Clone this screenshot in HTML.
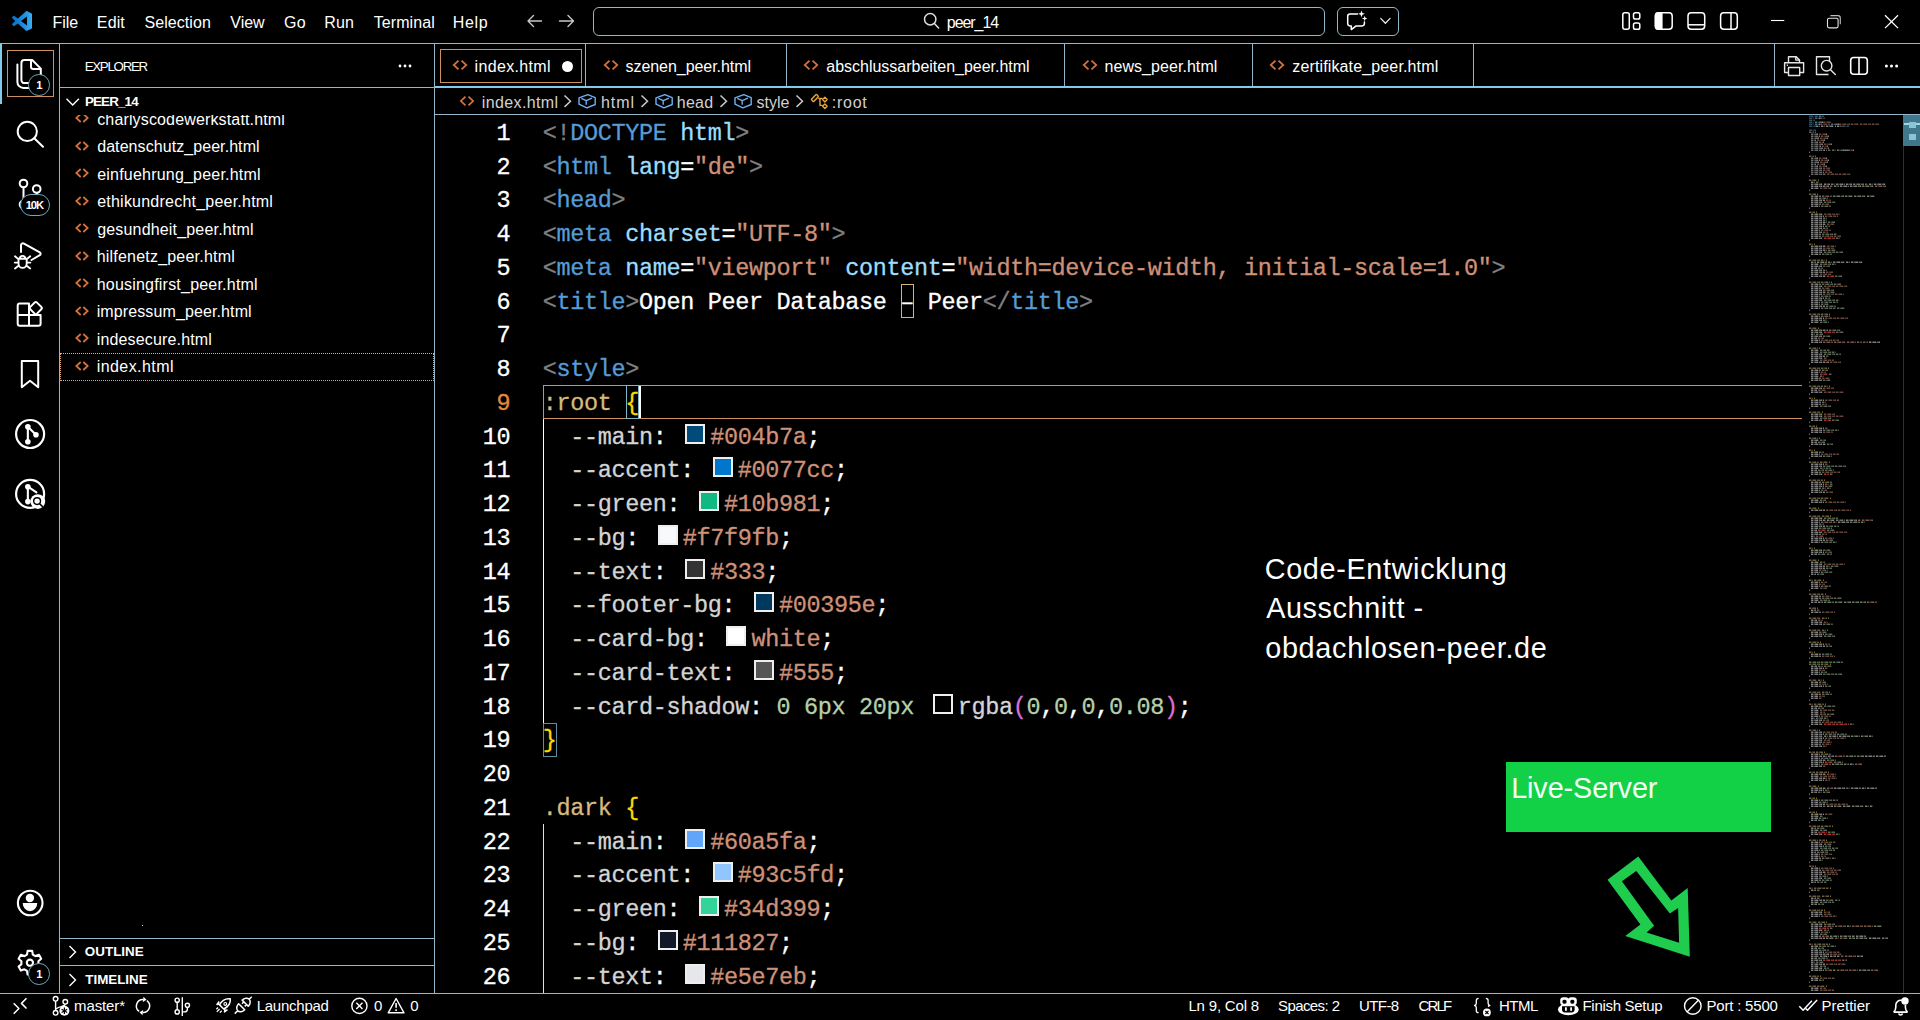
<!DOCTYPE html>
<html lang="en"><head><meta charset="utf-8"><title>index.html - peer_14 - Visual Studio Code</title>
<style>
html,body{margin:0;padding:0;background:#000;}
body{width:1920px;height:1020px;overflow:hidden;position:relative;font-family:"Liberation Sans",sans-serif;color:#fff;}
.t{position:absolute;white-space:pre;line-height:20px;font-family:"Liberation Sans",sans-serif;}
.a{position:absolute;}
svg{position:absolute;overflow:visible;}
.ln{position:absolute;left:0;width:1920px;height:34px;}
.code{position:absolute;white-space:pre;font-family:"Liberation Mono",monospace;-webkit-text-stroke:0.3px;}
.sw{display:inline-block;box-sizing:border-box;width:20px;height:20px;border:2px solid #eee;margin:0 5px;vertical-align:0px;}
</style></head><body>

<!-- frame borders -->
<div class="a" style="left:0px;top:43px;width:1920px;height:1px;background:#93b6ca;"></div>
<div class="a" style="left:59px;top:44px;width:1px;height:950px;background:#93b6ca;"></div>
<div class="a" style="left:434px;top:44px;width:1px;height:950px;background:#93b6ca;"></div>
<div class="a" style="left:60px;top:87px;width:374px;height:1px;background:#93b6ca;"></div>
<div class="a" style="left:435px;top:86px;width:1485px;height:2px;background:#7fcbe9;"></div>
<div class="a" style="left:435px;top:114px;width:1485px;height:1px;background:#93b6ca;"></div>
<div class="a" style="left:0px;top:993px;width:1920px;height:1px;background:#93b6ca;"></div>
<div class="a" style="left:60px;top:938px;width:374px;height:1px;background:#93b6ca;"></div>
<div class="a" style="left:60px;top:965px;width:374px;height:1px;background:#93b6ca;"></div>
<div class="a" style="left:585px;top:44px;width:1px;height:42px;background:#93b6ca;"></div>
<div class="a" style="left:786px;top:44px;width:1px;height:42px;background:#93b6ca;"></div>
<div class="a" style="left:1064px;top:44px;width:1px;height:42px;background:#93b6ca;"></div>
<div class="a" style="left:1252px;top:44px;width:1px;height:42px;background:#93b6ca;"></div>
<div class="a" style="left:1473px;top:44px;width:1px;height:42px;background:#93b6ca;"></div>
<div class="a" style="left:1774px;top:44px;width:1px;height:42px;background:#93b6ca;"></div>
<div class="a" style="left:0px;top:44px;width:2px;height:60px;background:#7fcbe9;"></div>
<!-- title bar -->
<svg style="left:12px;top:11px" width="20" height="20" viewBox="0 0 100 100"><defs><linearGradient id="vg" x1="0" y1="0" x2="1" y2="0"><stop offset="0" stop-color="#0a6fc2"/><stop offset="0.6" stop-color="#1f8fe0"/><stop offset="1" stop-color="#37aef5"/></linearGradient></defs><path fill="url(#vg)" fill-rule="evenodd" d="M70.9 99.3c1.6.6 3.4.6 5-.2l20.6-9.9c2.1-1 3.5-3.2 3.5-5.6V16.4c0-2.4-1.4-4.6-3.5-5.6L75.9.9c-2.1-1-4.6-.8-6.4.6-.3.2-.5.4-.7.6L29.4 38 12.2 25c-1.6-1.2-3.8-1.1-5.3.2l-5.5 5c-1.8 1.7-1.8 4.5 0 6.2L16.200 50 1.400 63.600c-1.800 1.600-1.800 4.500 0 6.100l5.500 5c1.500 1.400 3.700 1.500 5.300.300L29.400 62l39.400 36c.600.600 1.300 1.100 2.100 1.400zM75 27.300L45.100 50 75 72.700z"/></svg>
<span class="t " style="left:52.50px;top:13px;font-size:16px;letter-spacing:-0.083px;color:#fff;">File</span>
<span class="t " style="left:96.85px;top:13px;font-size:16px;letter-spacing:0.133px;color:#fff;">Edit</span>
<span class="t " style="left:144.55px;top:13px;font-size:16px;letter-spacing:0.056px;color:#fff;">Selection</span>
<span class="t " style="left:230.30px;top:13px;font-size:16px;letter-spacing:-0.033px;color:#fff;">View</span>
<span class="t " style="left:283.95px;top:13px;font-size:16px;letter-spacing:0.300px;color:#fff;">Go</span>
<span class="t " style="left:324.35px;top:13px;font-size:16px;letter-spacing:0.125px;color:#fff;">Run</span>
<span class="t " style="left:373.75px;top:13px;font-size:16px;letter-spacing:0.071px;color:#fff;">Terminal</span>
<span class="t " style="left:452.75px;top:13px;font-size:16px;letter-spacing:0.667px;color:#fff;">Help</span>
<svg style="left:520px;top:10px" width="64" height="22" viewBox="520 10 64 22" fill="none" stroke="#c8c8c8" stroke-width="1.4" stroke-linecap="round" stroke-linejoin="round"><path d="M541.500 21H528M533.500 15.500L528 21l5.500 5.500"/><path d="M559.500 21H573.500M568 15.500l5.500 5.500-5.500 5.500"/></svg>
<div class="a" style="left:593px;top:7px;width:730px;height:27px;border:1px solid #93b6ca;border-radius:6px;"></div>
<svg style="left:920px;top:10px" width="22" height="22" viewBox="920 10 22 22" fill="none" stroke="#e0e0e0" stroke-width="1.5" stroke-linecap="round"><circle cx="930.200" cy="19.300" r="5.700"/><path d="M934.400 23.600L938.600 28"/></svg>
<span class="t " style="left:946.80px;top:13px;font-size:16px;letter-spacing:-1.050px;color:#fff;">peer_14</span>
<div class="a" style="left:1337px;top:7px;width:60px;height:27px;border:1px solid #8fb9c9;border-radius:6px;"></div>
<svg style="left:1340px;top:8px" width="56" height="26" viewBox="1340 8 56 26" fill="none" stroke="#fff" stroke-width="1.5" stroke-linecap="round" stroke-linejoin="round"><path d="M1357.500 13.900H1350a2.300 2.300 0 0 0-2.300 2.300v7.400a2.300 2.300 0 0 0 2.300 2.300h1.300v3.700l4.800-3.700h6a2.300 2.300 0 0 0 2.300-2.300v-1.600"/><path fill="#fff" stroke="none" d="M1361.500 10.400l.9 2.500 2.500.9-2.500.9-.9 2.500-.9-2.500-2.500-.9 2.500-.9zM1364.700 15.800l.7 2 2 .7-2 .7-.7 2-.7-2-2-.7 2-.7z"/><path stroke="#e8e8e8" stroke-width="1.300" d="M1380.700 18.400l4.700 4.800 4.700-4.800"/></svg>
<svg style="left:1618px;top:8px" width="124" height="26" viewBox="1618 8 124 26" fill="none" stroke="#fff" stroke-width="1.500">
<rect x="1622.800" y="12.800" width="6.500" height="16.400" rx="2"/><rect x="1633.500" y="12.800" width="6.300" height="6.300" rx="1.800"/><rect x="1633.500" y="22.900" width="6.300" height="6.300" rx="1.800"/>
<rect x="1655.400" y="12.800" width="16.800" height="16.400" rx="3.200"/><path fill="#fff" stroke="none" d="M1658.600 12.100h4v17.800h-4a3.900 3.900 0 0 1-3.900-3.900v-10a3.900 3.900 0 0 1 3.900-3.900z"/>
<rect x="1688" y="12.800" width="16.700" height="16.400" rx="3.200"/><path d="M1688 24.800h16.700"/>
<rect x="1720.600" y="12.800" width="16.700" height="16.400" rx="3.200"/><path d="M1731 12.800v16.400"/>
</svg>
<svg style="left:1764px;top:8px" width="150" height="28" viewBox="1764 8 150 28" fill="none" stroke="#fff" stroke-width="1.100">
<path d="M1771 20.500h13.300"/>
<rect x="1827.500" y="18.200" width="10.600" height="9.700" rx="1.600" stroke="#e4e4e4"/><path stroke="#bdbdbd" d="M1830.400 15.600h7.600a2.300 2.300 0 0 1 2.300 2.300v6.400"/>
<path stroke-width="1.300" d="M1885 15.200l13 12.900M1898 15.200l-13 12.900"/>
</svg>
<!-- activity bar -->
<div class="a" style="left:7px;top:50px;width:45px;height:45px;border:1px solid #cf8f5c;"></div>
<svg style="left:0;top:44px" width="60" height="470" viewBox="0 44 60 470" fill="none" stroke="#fff" stroke-width="2" stroke-linecap="round" stroke-linejoin="round">
<!-- files -->
<path d="M24.400 60h7.800l8.600 8.600v11.500a3 3 0 0 1-3 3H24.400a3 3 0 0 1-3-3V63a3 3 0 0 1 3-3z"/><path d="M31 60.500v6.200a2.300 2.300 0 0 0 2.300 2.300h7"/><path d="M17.400 64.500v17.400a6 6 0 0 0 6 6h6.500"/>
<!-- search -->
<circle cx="27.300" cy="131.400" r="9.600"/><path d="M34.300 138.300l8.700 8.400"/>
<!-- source control -->
<circle cx="23.500" cy="183.500" r="3.800"/><circle cx="36.700" cy="189" r="3.800"/><circle cx="23.500" cy="204.500" r="3.800"/><path d="M23.500 187.500v13M36.700 193v1.500a4 4 0 0 1-4 4h-5.200a4 4 0 0 0-4 4"/>
<!-- debug -->
<path d="M21 252v-6.600a2 2 0 0 1 3-1.800l15.800 8.800a1.600 1.600 0 0 1 0 2.800l-8.300 4.800"/>
<path stroke-width="1.900" d="M19.800 258.700a2.800 2.800 0 0 1 5.600 0M18.500 258.700h8.200v4.700a4.100 4.500 0 0 1-8.200 0zM15 256.300l3.300 2.800M30.200 256.300l-3.300 2.800M14.800 262.600h3.500M30.400 262.600h-3.500M15 268.400l3.500-2.700M30.200 268.400l-3.500-2.700"/>
<!-- extensions -->
<path d="M29 303.400h-9.300a2 2 0 0 0-2 2v18.400a2 2 0 0 0 2 2h18.900a2 2 0 0 0 2-2v-8.900H17.700M29 303.400v22.400"/><path d="M34.600 302.600a1.700 1.700 0 0 1 2.400 0l4.300 4.300a1.700 1.700 0 0 1 0 2.400l-4.300 4.300a1.700 1.700 0 0 1-2.400 0l-4.300-4.300a1.700 1.700 0 0 1 0-2.400z"/>
<!-- bookmark -->
<path d="M21.800 361h16.400v26.200l-8.200-6.400-8.200 6.400z"/>
<!-- git graph -->
<circle cx="30.100" cy="434" r="14" stroke-width="2.200"/><g fill="#fff" stroke="none"><circle cx="27.850" cy="426.800" r="2.800"/><circle cx="36" cy="434.700" r="2.800"/><circle cx="27.850" cy="441.700" r="2.800"/></g><path stroke-width="2.100" d="M27.850 426.800v14.900M27.850 426.800l8.100 7.900"/>
<!-- git graph search -->
<circle cx="30.100" cy="493.900" r="14" stroke-width="2.200"/><g fill="#fff" stroke="none"><circle cx="27.850" cy="486.700" r="2.800"/><circle cx="27.850" cy="501.600" r="2.800"/></g><path stroke-width="2.100" d="M27.850 486.700v14.900M27.850 486.700l8.600 5.600"/>
<circle cx="37.800" cy="501.600" r="7.400" fill="#fff" stroke="none"/><circle cx="37.100" cy="501.100" r="3.400" fill="none" stroke="#000" stroke-width="1.400"/><path stroke="#000" stroke-width="1.500" d="M39.600 503.700l2.700 2.700"/>
</svg>
<div class="a" style="left:28.400000000000002px;top:74.10000000000001px;width:19.6px;height:19.6px;border:1px solid #6fa9bc;border-radius:10.8px;background:#000;"></div><span class="t " style="left:36.30px;top:75px;font-size:11.2px;letter-spacing:0.000px;color:#fff;font-weight:700;">1</span>
<div class="a" style="left:20.4px;top:194px;width:27.4px;height:20px;border:1px solid #6fa9bc;border-radius:11px;background:#000;"></div><span class="t " style="left:25.70px;top:195px;font-size:11.2px;letter-spacing:-1.100px;color:#fff;font-weight:700;">10K</span>
<svg style="left:0;top:880px" width="60" height="112" viewBox="0 880 60 112" fill="none" stroke="#fff" stroke-width="2.100" stroke-linejoin="round">
<circle cx="30.200" cy="903" r="12.300"/><circle cx="29.900" cy="898" r="4.200" fill="#fff" stroke="none"/><path fill="#fff" stroke="none" d="M22.700 903h14.600a7.300 8.200 0 0 1-14.600 0z"/>
<path d="M27.0 954.6L27.6 950.9L32.2 950.9L32.8 954.6L35.4 956.1L39.0 954.8L41.2 958.8L38.4 961.2L38.4 964.2L41.2 966.6L39.0 970.6L35.4 969.3L32.8 970.8L32.2 974.5L27.6 974.5L27.0 970.8L24.4 969.3L20.8 970.6L18.6 966.6L21.4 964.2L21.4 961.2L18.6 958.8L20.8 954.8L24.4 956.1z"/><circle cx="29.9" cy="962.7" r="3.100"/></svg>
<div class="a" style="left:28.400000000000002px;top:963.1px;width:19.6px;height:19.6px;border:1px solid #6fa9bc;border-radius:10.8px;background:#000;"></div><span class="t " style="left:36.30px;top:964px;font-size:11.2px;letter-spacing:0.000px;color:#fff;font-weight:700;">1</span>
<!-- sidebar -->
<span class="t " style="left:84.70px;top:57px;font-size:13.3px;letter-spacing:-1.279px;color:#fff;">EXPLORER</span>
<svg style="left:396px;top:62px" width="20" height="8" viewBox="396 62 20 8" fill="#fff"><circle cx="400" cy="66" r="1.400"/><circle cx="405" cy="66" r="1.400"/><circle cx="410" cy="66" r="1.400"/></svg>
<div class="a" style="left:60px;top:115px;width:374px;height:823px;overflow:hidden;"><div class="a" style="left:-60px;top:-115px;width:500px;height:1020px;">
<svg style="left:74.3px;top:111.0px" width="16" height="14" viewBox="74.3 111.0 16 14" fill="none" stroke="#d9733c" stroke-width="1.700" stroke-linejoin="miter"><path d="M81.0 114.0L76.6 118.0L81.0 122.0M83.6 114.0L88.0 118.0L83.6 122.0"/></svg>
<span class="t " style="left:97.20px;top:110px;font-size:16px;letter-spacing:0.150px;color:#fff;">charlyscodewerkstatt.html</span>
<svg style="left:74.3px;top:138.5px" width="16" height="14" viewBox="74.3 138.5 16 14" fill="none" stroke="#d9733c" stroke-width="1.700" stroke-linejoin="miter"><path d="M81.0 141.5L76.6 145.5L81.0 149.5M83.6 141.5L88.0 145.5L83.6 149.5"/></svg>
<span class="t " style="left:97.20px;top:137px;font-size:16px;letter-spacing:0.070px;color:#fff;">datenschutz_peer.html</span>
<svg style="left:74.3px;top:166.0px" width="16" height="14" viewBox="74.3 166.0 16 14" fill="none" stroke="#d9733c" stroke-width="1.700" stroke-linejoin="miter"><path d="M81.0 169.0L76.6 173.0L81.0 177.0M83.6 169.0L88.0 173.0L83.6 177.0"/></svg>
<span class="t " style="left:97.20px;top:165px;font-size:16px;letter-spacing:0.208px;color:#fff;">einfuehrung_peer.html</span>
<svg style="left:74.3px;top:193.5px" width="16" height="14" viewBox="74.3 193.5 16 14" fill="none" stroke="#d9733c" stroke-width="1.700" stroke-linejoin="miter"><path d="M81.0 196.5L76.6 200.5L81.0 204.5M83.6 196.5L88.0 200.5L83.6 204.5"/></svg>
<span class="t " style="left:97.20px;top:192px;font-size:16px;letter-spacing:0.225px;color:#fff;">ethikundrecht_peer.html</span>
<svg style="left:74.3px;top:221.0px" width="16" height="14" viewBox="74.3 221.0 16 14" fill="none" stroke="#d9733c" stroke-width="1.700" stroke-linejoin="miter"><path d="M81.0 224.0L76.6 228.0L81.0 232.0M83.6 224.0L88.0 228.0L83.6 232.0"/></svg>
<span class="t " style="left:97.20px;top:220px;font-size:16px;letter-spacing:0.174px;color:#fff;">gesundheit_peer.html</span>
<svg style="left:74.3px;top:248.5px" width="16" height="14" viewBox="74.3 248.5 16 14" fill="none" stroke="#d9733c" stroke-width="1.700" stroke-linejoin="miter"><path d="M81.0 251.5L76.6 255.5L81.0 259.5M83.6 251.5L88.0 255.5L83.6 259.5"/></svg>
<span class="t " style="left:96.70px;top:247px;font-size:16px;letter-spacing:0.208px;color:#fff;">hilfenetz_peer.html</span>
<svg style="left:74.3px;top:276.0px" width="16" height="14" viewBox="74.3 276.0 16 14" fill="none" stroke="#d9733c" stroke-width="1.700" stroke-linejoin="miter"><path d="M81.0 279.0L76.6 283.0L81.0 287.0M83.6 279.0L88.0 283.0L83.6 287.0"/></svg>
<span class="t " style="left:96.70px;top:275px;font-size:16px;letter-spacing:0.210px;color:#fff;">housingfirst_peer.html</span>
<svg style="left:74.3px;top:303.5px" width="16" height="14" viewBox="74.3 303.5 16 14" fill="none" stroke="#d9733c" stroke-width="1.700" stroke-linejoin="miter"><path d="M81.0 306.5L76.6 310.5L81.0 314.5M83.6 306.5L88.0 310.5L83.6 314.5"/></svg>
<span class="t " style="left:96.70px;top:302px;font-size:16px;letter-spacing:0.111px;color:#fff;">impressum_peer.html</span>
<svg style="left:74.3px;top:331.0px" width="16" height="14" viewBox="74.3 331.0 16 14" fill="none" stroke="#d9733c" stroke-width="1.700" stroke-linejoin="miter"><path d="M81.0 334.0L76.6 338.0L81.0 342.0M83.6 334.0L88.0 338.0L83.6 342.0"/></svg>
<span class="t " style="left:96.70px;top:330px;font-size:16px;letter-spacing:0.157px;color:#fff;">indesecure.html</span>
<svg style="left:74.3px;top:358.5px" width="16" height="14" viewBox="74.3 358.5 16 14" fill="none" stroke="#d9733c" stroke-width="1.700" stroke-linejoin="miter"><path d="M81.0 361.5L76.6 365.5L81.0 369.5M83.6 361.5L88.0 365.5L83.6 369.5"/></svg>
<span class="t " style="left:96.70px;top:357px;font-size:16px;letter-spacing:0.428px;color:#fff;">index.html</span>
</div></div>
<svg style="left:64px;top:94px" width="18" height="16" viewBox="64 94 18 16" fill="none" stroke="#fff" stroke-width="1.400"><path d="M66.500 98.700l6.200 6.300 6.200-6.300"/></svg>
<span class="t " style="left:84.95px;top:92px;font-size:13.4px;letter-spacing:-0.858px;color:#fff;font-weight:700;">PEER_14</span>
<div class="a" style="left:60px;top:353px;width:372px;height:26px;border:1px dotted #d8a878;"></div>
<div class="a" style="left:142px;top:925px;width:1px;height:1px;background:#ddd;"></div>
<svg style="left:64px;top:943.3px" width="18" height="18" viewBox="64 943.3 18 18" fill="none" stroke="#fff" stroke-width="1.400"><path d="M69.500 946.3l6 6-6 6"/></svg>
<span class="t " style="left:84.80px;top:942px;font-size:13.4px;letter-spacing:0.025px;color:#fff;font-weight:700;">OUTLINE</span>
<svg style="left:64px;top:970.8px" width="18" height="18" viewBox="64 970.8 18 18" fill="none" stroke="#fff" stroke-width="1.400"><path d="M69.500 973.8l6 6-6 6"/></svg>
<span class="t " style="left:85.30px;top:970px;font-size:13.4px;letter-spacing:-0.029px;color:#fff;font-weight:700;">TIMELINE</span>
<!-- tabs -->
<div class="a" style="left:440px;top:49px;width:140px;height:32px;border:1px solid #cf8f5c;"></div>
<svg style="left:451.7px;top:58.2px" width="16" height="14" viewBox="451.7 58.2 16 14" fill="none" stroke="#d9733c" stroke-width="1.700" stroke-linejoin="miter"><path d="M458.2 60.8L453.4 65.2L458.2 69.6M461.2 60.8L466.0 65.2L461.2 69.6"/></svg>
<span class="t " style="left:474.60px;top:57px;font-size:16px;letter-spacing:0.339px;color:#fff;">index.html</span>
<svg style="left:602.5px;top:58.2px" width="16" height="14" viewBox="602.5 58.2 16 14" fill="none" stroke="#d9733c" stroke-width="1.700" stroke-linejoin="miter"><path d="M609.0 60.8L604.2 65.2L609.0 69.6M612.0 60.8L616.8 65.2L612.0 69.6"/></svg>
<span class="t " style="left:625.50px;top:57px;font-size:16px;letter-spacing:-0.050px;color:#fff;">szenen_peer.html</span>
<svg style="left:803.3px;top:58.2px" width="16" height="14" viewBox="803.3 58.2 16 14" fill="none" stroke="#d9733c" stroke-width="1.700" stroke-linejoin="miter"><path d="M809.8 60.8L805.0 65.2L809.8 69.6M812.8 60.8L817.6 65.2L812.8 69.6"/></svg>
<span class="t " style="left:826.25px;top:57px;font-size:16px;letter-spacing:-0.010px;color:#fff;">abschlussarbeiten_peer.html</span>
<svg style="left:1081.5px;top:58.2px" width="16" height="14" viewBox="1081.5 58.2 16 14" fill="none" stroke="#d9733c" stroke-width="1.700" stroke-linejoin="miter"><path d="M1088.0 60.8L1083.2 65.2L1088.0 69.6M1091.0 60.8L1095.8 65.2L1091.0 69.6"/></svg>
<span class="t " style="left:1104.50px;top:57px;font-size:16px;letter-spacing:0.058px;color:#fff;">news_peer.html</span>
<svg style="left:1269.2px;top:58.2px" width="16" height="14" viewBox="1269.2 58.2 16 14" fill="none" stroke="#d9733c" stroke-width="1.700" stroke-linejoin="miter"><path d="M1275.7 60.8L1270.9 65.2L1275.7 69.6M1278.7 60.8L1283.5 65.2L1278.7 69.6"/></svg>
<span class="t " style="left:1292.25px;top:57px;font-size:16px;letter-spacing:0.138px;color:#fff;">zertifikate_peer.html</span>
<div class="a" style="left:562px;top:60.500px;width:11px;height:11px;border-radius:6px;background:#fff;"></div>
<svg style="left:1778px;top:52px" width="130" height="28" viewBox="1778 52 130 28" fill="none" stroke="#e6e6e6" stroke-width="1.400" stroke-linejoin="round">
<path d="M1788.500 62.500v-5.800h7.800l3.200 3.200v2.600M1795.800 56.700v3.400h3.600"/><path d="M1788.400 72.500h-3.800v-9.800h19v9.800h-3.900"/><rect x="1788.500" y="67.500" width="11.200" height="8" /><path d="M1786.700 65.200h1.200" stroke-width="1.600"/>
<path d="M1829.500 62v-5.300h-13v17.800h12"/><circle cx="1826.600" cy="65.700" r="5.300"/><path d="M1830.500 69.800l4.800 4.800" stroke-linecap="round"/>
<rect x="1850.700" y="57.500" width="16.600" height="16.800" rx="3" stroke="#fff" stroke-width="1.600"/><path d="M1859 57.500v16.800" stroke="#fff" stroke-width="1.600"/>
<g fill="#fff" stroke="none"><circle cx="1886.400" cy="66.100" r="1.500"/><circle cx="1891.500" cy="66.100" r="1.500"/><circle cx="1896.600" cy="66.100" r="1.500"/></g>
</svg>
<!-- breadcrumbs -->
<svg style="left:458.8px;top:94.1px" width="16" height="14" viewBox="458.8 94.1 16 14" fill="none" stroke="#d9733c" stroke-width="1.700" stroke-linejoin="miter"><path d="M465.3 96.8L460.7 101.1L465.3 105.4M468.3 96.8L472.9 101.1L468.3 105.4"/></svg>
<span class="t " style="left:481.75px;top:93px;font-size:16px;letter-spacing:0.378px;color:#d0d0d0;">index.html</span>
<svg style="left:562px;top:93px" width="12" height="16" viewBox="562 93 12 16" fill="none" stroke="#c8c8c8" stroke-width="1.500"><path d="M564.5 95.500l6 5.700-6 5.700"/></svg>
<svg style="left:577.3px;top:92px" width="21" height="18" viewBox="577.3 92 21 18" fill="none" stroke="#6fb0f2" stroke-width="1.400" stroke-linejoin="round"><path d="M588.0999999999999 94.600l7.400 3v6.900l-8.300 3.300-7.900-3.600v-6.300z"/><path d="M581.5999999999999 98.400l4.900 2.200 5.800-2.500M586.5 100.600v4.200"/></svg>
<span class="t " style="left:601.00px;top:93px;font-size:16px;letter-spacing:0.950px;color:#d0d0d0;">html</span>
<svg style="left:638.5px;top:93px" width="12" height="16" viewBox="638.5 93 12 16" fill="none" stroke="#c8c8c8" stroke-width="1.500"><path d="M641.0 95.500l6 5.700-6 5.700"/></svg>
<svg style="left:653.5px;top:92px" width="21" height="18" viewBox="653.5 92 21 18" fill="none" stroke="#6fb0f2" stroke-width="1.400" stroke-linejoin="round"><path d="M664.3 94.600l7.400 3v6.900l-8.300 3.300-7.900-3.600v-6.300z"/><path d="M657.8 98.400l4.900 2.200 5.800-2.500M662.7 100.600v4.200"/></svg>
<span class="t " style="left:676.80px;top:93px;font-size:16px;letter-spacing:0.217px;color:#d0d0d0;">head</span>
<svg style="left:717.5px;top:93px" width="12" height="16" viewBox="717.5 93 12 16" fill="none" stroke="#c8c8c8" stroke-width="1.500"><path d="M720.0 95.500l6 5.700-6 5.700"/></svg>
<svg style="left:732.9px;top:92px" width="21" height="18" viewBox="732.9 92 21 18" fill="none" stroke="#6fb0f2" stroke-width="1.400" stroke-linejoin="round"><path d="M743.6999999999999 94.600l7.400 3v6.900l-8.300 3.300-7.900-3.600v-6.300z"/><path d="M737.1999999999999 98.400l4.900 2.200 5.800-2.500M742.1 100.600v4.200"/></svg>
<span class="t " style="left:756.40px;top:93px;font-size:16px;letter-spacing:0.025px;color:#d0d0d0;">style</span>
<svg style="left:794.3px;top:93px" width="12" height="16" viewBox="794.3 93 12 16" fill="none" stroke="#c8c8c8" stroke-width="1.500"><path d="M796.8 95.500l6 5.700-6 5.700"/></svg>
<svg style="left:809px;top:92px" width="22" height="18" viewBox="809 92 22 18" fill="none" stroke="#eaa43c" stroke-width="1.400" stroke-linejoin="round"><rect x="811.200" y="96.400" width="7.400" height="3.200" rx="0.800" transform="rotate(-46 814.900 98)"/><path d="M818.300 98.500h4.200M820 98.500v6.900h2.600"/><path d="M824.900 97.300l2.300 2.300-2.300 2.300-2.300-2.300zM824.900 103.900l2.300 2.300-2.300 2.300-2.300-2.300z"/></svg>
<span class="t " style="left:831.75px;top:93px;font-size:16px;letter-spacing:0.750px;color:#d0d0d0;">:root</span>
<!-- editor -->
<div class="a" id="ed" style="left:435px;top:115px;width:1368px;height:878px;overflow:hidden;"><div class="a" style="left:-435px;top:-115px;width:1920px;height:1020px;">
<div class="a" style="left:543px;top:385px;width:1258px;height:32px;border:1px solid #cf8f5c;border-right:0;"></div>
<div class="a" style="left:543px;top:419px;width:1px;height:304px;background:#fff;"></div>
<div class="a" style="left:543px;top:824px;width:1px;height:170px;background:#e0e0e0;"></div>
<div class="a" style="left:626px;top:385px;width:11px;height:32px;border:1px solid #7fb6c9;"></div>
<div class="a" style="left:543px;top:723px;width:12px;height:32px;border:1px solid #5f8ea0;"></div>
<div class="a" style="left:638.500px;top:386px;width:2.500px;height:32px;background:#fff;"></div>
<div class="a" style="left:901px;top:284px;width:11px;height:32px;border:1px solid #d9b27c;"></div>
<div class="code" style="left:440px;width:70.500px;text-align:right;top:116.75px;line-height:33.75px;font-size:23.5px;letter-spacing:-0.3523px;color:#fff;"><span style="margin-right:0.3523px">1</span></div>
<div class="code" style="left:542.7px;top:116.75px;line-height:33.75px;font-size:23.5px;letter-spacing:-0.3523px;"><span style="color:#808080">&lt;!</span><span style="color:#569cd6">DOCTYPE</span><span style="color:#ffffff"> </span><span style="color:#9cdcfe">html</span><span style="color:#808080">&gt;</span></div>
<div class="code" style="left:440px;width:70.500px;text-align:right;top:150.50px;line-height:33.75px;font-size:23.5px;letter-spacing:-0.3523px;color:#fff;"><span style="margin-right:0.3523px">2</span></div>
<div class="code" style="left:542.7px;top:150.50px;line-height:33.75px;font-size:23.5px;letter-spacing:-0.3523px;"><span style="color:#808080">&lt;</span><span style="color:#569cd6">html</span><span style="color:#ffffff"> </span><span style="color:#9cdcfe">lang</span><span style="color:#ffffff">=</span><span style="color:#ce9178">"de"</span><span style="color:#808080">&gt;</span></div>
<div class="code" style="left:440px;width:70.500px;text-align:right;top:184.25px;line-height:33.75px;font-size:23.5px;letter-spacing:-0.3523px;color:#fff;"><span style="margin-right:0.3523px">3</span></div>
<div class="code" style="left:542.7px;top:184.25px;line-height:33.75px;font-size:23.5px;letter-spacing:-0.3523px;"><span style="color:#808080">&lt;</span><span style="color:#569cd6">head</span><span style="color:#808080">&gt;</span></div>
<div class="code" style="left:440px;width:70.500px;text-align:right;top:218.00px;line-height:33.75px;font-size:23.5px;letter-spacing:-0.3523px;color:#fff;"><span style="margin-right:0.3523px">4</span></div>
<div class="code" style="left:542.7px;top:218.00px;line-height:33.75px;font-size:23.5px;letter-spacing:-0.3523px;"><span style="color:#808080">&lt;</span><span style="color:#569cd6">meta</span><span style="color:#ffffff"> </span><span style="color:#9cdcfe">charset</span><span style="color:#ffffff">=</span><span style="color:#ce9178">"UTF-8"</span><span style="color:#808080">&gt;</span></div>
<div class="code" style="left:440px;width:70.500px;text-align:right;top:251.75px;line-height:33.75px;font-size:23.5px;letter-spacing:-0.3523px;color:#fff;"><span style="margin-right:0.3523px">5</span></div>
<div class="code" style="left:542.7px;top:251.75px;line-height:33.75px;font-size:23.5px;letter-spacing:-0.3523px;"><span style="color:#808080">&lt;</span><span style="color:#569cd6">meta</span><span style="color:#ffffff"> </span><span style="color:#9cdcfe">name</span><span style="color:#ffffff">=</span><span style="color:#ce9178">"viewport"</span><span style="color:#ffffff"> </span><span style="color:#9cdcfe">content</span><span style="color:#ffffff">=</span><span style="color:#ce9178">"width=device-width, initial-scale=1.0"</span><span style="color:#808080">&gt;</span></div>
<div class="code" style="left:440px;width:70.500px;text-align:right;top:285.50px;line-height:33.75px;font-size:23.5px;letter-spacing:-0.3523px;color:#fff;"><span style="margin-right:0.3523px">6</span></div>
<div class="code" style="left:542.7px;top:285.50px;line-height:33.75px;font-size:23.5px;letter-spacing:-0.3523px;"><span style="color:#808080">&lt;</span><span style="color:#569cd6">title</span><span style="color:#808080">&gt;</span><span style="color:#ffffff">Open Peer Database – Peer</span><span style="color:#808080">&lt;/</span><span style="color:#569cd6">title</span><span style="color:#808080">&gt;</span></div>
<div class="code" style="left:440px;width:70.500px;text-align:right;top:319.25px;line-height:33.75px;font-size:23.5px;letter-spacing:-0.3523px;color:#fff;"><span style="margin-right:0.3523px">7</span></div>
<div class="code" style="left:440px;width:70.500px;text-align:right;top:353.00px;line-height:33.75px;font-size:23.5px;letter-spacing:-0.3523px;color:#fff;"><span style="margin-right:0.3523px">8</span></div>
<div class="code" style="left:542.7px;top:353.00px;line-height:33.75px;font-size:23.5px;letter-spacing:-0.3523px;"><span style="color:#808080">&lt;</span><span style="color:#569cd6">style</span><span style="color:#808080">&gt;</span></div>
<div class="code" style="left:440px;width:70.500px;text-align:right;top:386.75px;line-height:33.75px;font-size:23.5px;letter-spacing:-0.3523px;color:#e08a3c;"><span style="margin-right:0.3523px">9</span></div>
<div class="code" style="left:542.7px;top:386.75px;line-height:33.75px;font-size:23.5px;letter-spacing:-0.3523px;"><span style="color:#d7ba7d">:root</span><span style="color:#ffffff"> </span><span style="color:#ffd700">{</span></div>
<div class="code" style="left:440px;width:70.500px;text-align:right;top:420.50px;line-height:33.75px;font-size:23.5px;letter-spacing:-0.3523px;color:#fff;"><span style="margin-right:0.3523px">10</span></div>
<div class="code" style="left:542.7px;top:420.50px;line-height:33.75px;font-size:23.5px;letter-spacing:-0.3523px;"><span style="color:#ffffff">  </span><span style="color:#d4d4d4">--main</span><span style="color:#ffffff">:</span><span style="color:#ffffff"> </span><span class="sw" style="background:#004b7a"></span><span style="color:#ce9178">#004b7a</span><span style="color:#ffffff">;</span></div>
<div class="code" style="left:440px;width:70.500px;text-align:right;top:454.25px;line-height:33.75px;font-size:23.5px;letter-spacing:-0.3523px;color:#fff;"><span style="margin-right:0.3523px">11</span></div>
<div class="code" style="left:542.7px;top:454.25px;line-height:33.75px;font-size:23.5px;letter-spacing:-0.3523px;"><span style="color:#ffffff">  </span><span style="color:#d4d4d4">--accent</span><span style="color:#ffffff">:</span><span style="color:#ffffff"> </span><span class="sw" style="background:#0077cc"></span><span style="color:#ce9178">#0077cc</span><span style="color:#ffffff">;</span></div>
<div class="code" style="left:440px;width:70.500px;text-align:right;top:488.00px;line-height:33.75px;font-size:23.5px;letter-spacing:-0.3523px;color:#fff;"><span style="margin-right:0.3523px">12</span></div>
<div class="code" style="left:542.7px;top:488.00px;line-height:33.75px;font-size:23.5px;letter-spacing:-0.3523px;"><span style="color:#ffffff">  </span><span style="color:#d4d4d4">--green</span><span style="color:#ffffff">:</span><span style="color:#ffffff"> </span><span class="sw" style="background:#10b981"></span><span style="color:#ce9178">#10b981</span><span style="color:#ffffff">;</span></div>
<div class="code" style="left:440px;width:70.500px;text-align:right;top:521.75px;line-height:33.75px;font-size:23.5px;letter-spacing:-0.3523px;color:#fff;"><span style="margin-right:0.3523px">13</span></div>
<div class="code" style="left:542.7px;top:521.75px;line-height:33.75px;font-size:23.5px;letter-spacing:-0.3523px;"><span style="color:#ffffff">  </span><span style="color:#d4d4d4">--bg</span><span style="color:#ffffff">:</span><span style="color:#ffffff"> </span><span class="sw" style="background:#f7f9fb"></span><span style="color:#ce9178">#f7f9fb</span><span style="color:#ffffff">;</span></div>
<div class="code" style="left:440px;width:70.500px;text-align:right;top:555.50px;line-height:33.75px;font-size:23.5px;letter-spacing:-0.3523px;color:#fff;"><span style="margin-right:0.3523px">14</span></div>
<div class="code" style="left:542.7px;top:555.50px;line-height:33.75px;font-size:23.5px;letter-spacing:-0.3523px;"><span style="color:#ffffff">  </span><span style="color:#d4d4d4">--text</span><span style="color:#ffffff">:</span><span style="color:#ffffff"> </span><span class="sw" style="background:#333"></span><span style="color:#ce9178">#333</span><span style="color:#ffffff">;</span></div>
<div class="code" style="left:440px;width:70.500px;text-align:right;top:589.25px;line-height:33.75px;font-size:23.5px;letter-spacing:-0.3523px;color:#fff;"><span style="margin-right:0.3523px">15</span></div>
<div class="code" style="left:542.7px;top:589.25px;line-height:33.75px;font-size:23.5px;letter-spacing:-0.3523px;"><span style="color:#ffffff">  </span><span style="color:#d4d4d4">--footer-bg</span><span style="color:#ffffff">:</span><span style="color:#ffffff"> </span><span class="sw" style="background:#00395e"></span><span style="color:#ce9178">#00395e</span><span style="color:#ffffff">;</span></div>
<div class="code" style="left:440px;width:70.500px;text-align:right;top:623.00px;line-height:33.75px;font-size:23.5px;letter-spacing:-0.3523px;color:#fff;"><span style="margin-right:0.3523px">16</span></div>
<div class="code" style="left:542.7px;top:623.00px;line-height:33.75px;font-size:23.5px;letter-spacing:-0.3523px;"><span style="color:#ffffff">  </span><span style="color:#d4d4d4">--card-bg</span><span style="color:#ffffff">:</span><span style="color:#ffffff"> </span><span class="sw" style="background:#fff"></span><span style="color:#ce9178">white</span><span style="color:#ffffff">;</span></div>
<div class="code" style="left:440px;width:70.500px;text-align:right;top:656.75px;line-height:33.75px;font-size:23.5px;letter-spacing:-0.3523px;color:#fff;"><span style="margin-right:0.3523px">17</span></div>
<div class="code" style="left:542.7px;top:656.75px;line-height:33.75px;font-size:23.5px;letter-spacing:-0.3523px;"><span style="color:#ffffff">  </span><span style="color:#d4d4d4">--card-text</span><span style="color:#ffffff">:</span><span style="color:#ffffff"> </span><span class="sw" style="background:#555"></span><span style="color:#ce9178">#555</span><span style="color:#ffffff">;</span></div>
<div class="code" style="left:440px;width:70.500px;text-align:right;top:690.50px;line-height:33.75px;font-size:23.5px;letter-spacing:-0.3523px;color:#fff;"><span style="margin-right:0.3523px">18</span></div>
<div class="code" style="left:542.7px;top:690.50px;line-height:33.75px;font-size:23.5px;letter-spacing:-0.3523px;"><span style="color:#ffffff">  </span><span style="color:#d4d4d4">--card-shadow</span><span style="color:#ffffff">:</span><span style="color:#ffffff"> </span><span style="color:#b5cea8">0</span><span style="color:#ffffff"> </span><span style="color:#b5cea8">6px</span><span style="color:#ffffff"> </span><span style="color:#b5cea8">20px</span><span style="color:#ffffff"> </span><span class="sw" style="background:#000"></span><span style="color:#d4d4d4">rgba</span><span style="color:#da70d6">(</span><span style="color:#b5cea8">0</span><span style="color:#ffffff">,</span><span style="color:#b5cea8">0</span><span style="color:#ffffff">,</span><span style="color:#b5cea8">0</span><span style="color:#ffffff">,</span><span style="color:#b5cea8">0.08</span><span style="color:#da70d6">)</span><span style="color:#ffffff">;</span></div>
<div class="code" style="left:440px;width:70.500px;text-align:right;top:724.25px;line-height:33.75px;font-size:23.5px;letter-spacing:-0.3523px;color:#fff;"><span style="margin-right:0.3523px">19</span></div>
<div class="code" style="left:542.7px;top:724.25px;line-height:33.75px;font-size:23.5px;letter-spacing:-0.3523px;"><span style="color:#ffd700">}</span></div>
<div class="code" style="left:440px;width:70.500px;text-align:right;top:758.00px;line-height:33.75px;font-size:23.5px;letter-spacing:-0.3523px;color:#fff;"><span style="margin-right:0.3523px">20</span></div>
<div class="code" style="left:440px;width:70.500px;text-align:right;top:791.75px;line-height:33.75px;font-size:23.5px;letter-spacing:-0.3523px;color:#fff;"><span style="margin-right:0.3523px">21</span></div>
<div class="code" style="left:542.7px;top:791.75px;line-height:33.75px;font-size:23.5px;letter-spacing:-0.3523px;"><span style="color:#d7ba7d">.dark</span><span style="color:#ffffff"> </span><span style="color:#ffd700">{</span></div>
<div class="code" style="left:440px;width:70.500px;text-align:right;top:825.50px;line-height:33.75px;font-size:23.5px;letter-spacing:-0.3523px;color:#fff;"><span style="margin-right:0.3523px">22</span></div>
<div class="code" style="left:542.7px;top:825.50px;line-height:33.75px;font-size:23.5px;letter-spacing:-0.3523px;"><span style="color:#ffffff">  </span><span style="color:#d4d4d4">--main</span><span style="color:#ffffff">:</span><span style="color:#ffffff"> </span><span class="sw" style="background:#60a5fa"></span><span style="color:#ce9178">#60a5fa</span><span style="color:#ffffff">;</span></div>
<div class="code" style="left:440px;width:70.500px;text-align:right;top:859.25px;line-height:33.75px;font-size:23.5px;letter-spacing:-0.3523px;color:#fff;"><span style="margin-right:0.3523px">23</span></div>
<div class="code" style="left:542.7px;top:859.25px;line-height:33.75px;font-size:23.5px;letter-spacing:-0.3523px;"><span style="color:#ffffff">  </span><span style="color:#d4d4d4">--accent</span><span style="color:#ffffff">:</span><span style="color:#ffffff"> </span><span class="sw" style="background:#93c5fd"></span><span style="color:#ce9178">#93c5fd</span><span style="color:#ffffff">;</span></div>
<div class="code" style="left:440px;width:70.500px;text-align:right;top:893.00px;line-height:33.75px;font-size:23.5px;letter-spacing:-0.3523px;color:#fff;"><span style="margin-right:0.3523px">24</span></div>
<div class="code" style="left:542.7px;top:893.00px;line-height:33.75px;font-size:23.5px;letter-spacing:-0.3523px;"><span style="color:#ffffff">  </span><span style="color:#d4d4d4">--green</span><span style="color:#ffffff">:</span><span style="color:#ffffff"> </span><span class="sw" style="background:#34d399"></span><span style="color:#ce9178">#34d399</span><span style="color:#ffffff">;</span></div>
<div class="code" style="left:440px;width:70.500px;text-align:right;top:926.75px;line-height:33.75px;font-size:23.5px;letter-spacing:-0.3523px;color:#fff;"><span style="margin-right:0.3523px">25</span></div>
<div class="code" style="left:542.7px;top:926.75px;line-height:33.75px;font-size:23.5px;letter-spacing:-0.3523px;"><span style="color:#ffffff">  </span><span style="color:#d4d4d4">--bg</span><span style="color:#ffffff">:</span><span style="color:#ffffff"> </span><span class="sw" style="background:#111827"></span><span style="color:#ce9178">#111827</span><span style="color:#ffffff">;</span></div>
<div class="code" style="left:440px;width:70.500px;text-align:right;top:960.50px;line-height:33.75px;font-size:23.5px;letter-spacing:-0.3523px;color:#fff;"><span style="margin-right:0.3523px">26</span></div>
<div class="code" style="left:542.7px;top:960.50px;line-height:33.75px;font-size:23.5px;letter-spacing:-0.3523px;"><span style="color:#ffffff">  </span><span style="color:#d4d4d4">--text</span><span style="color:#ffffff">:</span><span style="color:#ffffff"> </span><span class="sw" style="background:#e5e7eb"></span><span style="color:#ce9178">#e5e7eb</span><span style="color:#ffffff">;</span></div>
</div></div>
<!-- minimap -->
<svg style="left:1803px;top:115px" width="100" height="878" viewBox="1803 115 100 878" fill="none" stroke-width="1.400" stroke-dasharray="2 0.600 1 0.500 3 0.700 1 0.400 2 0.800"><path stroke="#404040" d="M1809 116.3h2M1823 116.3h1M1809 118.3h1M1824 118.3h1M1809 120.3h1M1814 120.3h1M1809 122.3h1M1830 122.3h1M1809 124.3h1M1878 124.3h1M1809 126.3h1M1815 126.3h1M1841 126.3h2M1848 126.3h1M1809 130.3h1M1815 130.3h1"/><path stroke="#2b4e6b" d="M1811 116.3h7M1810 118.3h4M1810 120.3h4M1810 122.3h4M1810 124.3h4M1810 126.3h5M1843 126.3h5M1810 130.3h5"/><path stroke="#4e6e7f" d="M1819 116.3h4M1815 118.3h4M1815 122.3h7M1815 124.3h4M1831 124.3h7"/><path stroke="#7f7f7f" d="M1819 118.3h1M1822 122.3h1M1819 124.3h1M1838 124.3h1M1816 126.3h4M1821 126.3h4M1826 126.3h8M1835 126.3h1M1837 126.3h4M1817 134.3h1M1826 134.3h1M1819 136.3h1M1828 136.3h1M1818 138.3h1M1827 138.3h1M1815 140.3h1M1824 140.3h1M1817 142.3h1M1823 142.3h1M1822 144.3h1M1831 144.3h1M1820 146.3h1M1827 146.3h1M1822 148.3h1M1828 148.3h1M1824 150.3h1M1843 150.3h1M1845 150.3h1M1847 150.3h1M1853 150.3h1M1817 158.3h1M1826 158.3h1M1819 160.3h1M1828 160.3h1M1818 162.3h1M1827 162.3h1M1815 164.3h1M1824 164.3h1M1817 166.3h1M1826 166.3h1M1811 182.3h4M1811 184.3h12M1824 184.3h6M1836 184.3h9M1846 184.3h6M1869 184.3h4M1874 184.3h12M1811 186.3h18M1840 186.3h9M1850 186.3h11M1811 188.3h8M1811 196.3h10M1811 198.3h7M1811 200.3h14M1811 202.3h12M1811 204.3h10M1811 206.3h9M1811 214.3h12M1811 216.3h13M1811 218.3h11M1811 220.3h11M1811 222.3h16M1811 224.3h15M1811 226.3h13M1811 228.3h11M1811 230.3h9M1811 232.3h11M1811 234.3h10M1811 236.3h10M1811 238.3h12M1811 246.3h15M1811 248.3h11M1811 250.3h16M1811 252.3h12M1811 254.3h10M1811 262.3h5M1817 262.3h10M1833 262.3h12M1846 262.3h4M1851 262.3h12M1811 264.3h8M1811 266.3h11M1811 268.3h6M1811 270.3h11M1811 272.3h14M1811 274.3h8M1811 276.3h15M1811 284.3h10M1811 286.3h12M1811 288.3h10M1811 290.3h11M1811 292.3h15M1811 294.3h11M1811 296.3h9M1811 298.3h13M1811 300.3h12M1811 302.3h9M1811 304.3h9M1811 306.3h14M1811 308.3h9M1811 316.3h9M1811 318.3h13M1811 320.3h11M1811 322.3h8M1811 330.3h17M1811 332.3h12M1811 334.3h4M1811 336.3h11M1811 338.3h6M1811 340.3h9M1811 342.3h11M1869 342.3h11M1811 350.3h8M1811 352.3h8M1811 354.3h12M1811 356.3h14M1811 358.3h12M1811 360.3h8M1811 362.3h18M1811 370.3h10M1811 372.3h9M1811 374.3h8M1811 376.3h8M1811 378.3h10M1811 380.3h11M1811 388.3h11M1811 390.3h6M1811 392.3h12M1811 400.3h13M1811 402.3h10M1811 404.3h10M1811 406.3h8M1811 414.3h12M1811 416.3h12M1811 418.3h8M1811 420.3h12M1811 428.3h13M1811 430.3h11M1811 432.3h11M1811 440.3h8M1811 442.3h6M1811 444.3h15M1811 452.3h7M1811 454.3h9M1811 456.3h11M1811 464.3h13M1811 466.3h11M1811 468.3h8M1811 470.3h6M1811 472.3h10M1811 474.3h12M1811 482.3h10M1811 484.3h13M1811 486.3h13M1811 488.3h10M1811 490.3h9M1811 492.3h14M1811 500.3h8M1811 502.3h13M1811 510.3h14M1811 518.3h12M1811 520.3h15M1827 520.3h8M1846 520.3h11M1811 522.3h9M1838 522.3h11M1811 524.3h7M1811 526.3h14M1811 528.3h7M1811 530.3h6M1811 532.3h12M1811 534.3h10M1811 536.3h4M1811 538.3h13M1811 540.3h14M1811 542.3h9M1811 550.3h11M1811 552.3h13M1811 554.3h6M1811 562.3h8M1811 564.3h12M1811 566.3h14M1811 568.3h14M1811 570.3h7M1811 572.3h9M1811 574.3h5M1811 582.3h9M1811 584.3h7M1811 586.3h9M1811 588.3h8M1811 596.3h10M1811 598.3h10M1811 600.3h8M1811 602.3h6M1818 602.3h5M1811 610.3h5M1811 612.3h10M1811 620.3h6M1811 622.3h12M1811 624.3h11M1811 632.3h7M1811 634.3h13M1811 636.3h12M1811 644.3h13M1811 646.3h14M1811 654.3h10M1811 656.3h10M1811 666.3h6M1811 668.3h13M1811 670.3h7M1811 672.3h9M1811 674.3h11M1811 682.3h7M1811 684.3h7M1811 686.3h13M1811 694.3h10M1811 696.3h7M1811 698.3h7M1811 706.3h12M1811 708.3h6M1811 710.3h8M1811 712.3h8M1811 714.3h8M1811 716.3h9M1811 718.3h4M1811 720.3h11M1811 722.3h10M1811 724.3h12M1811 732.3h11M1811 734.3h13M1811 736.3h12M1829 736.3h9M1839 736.3h11M1869 736.3h4M1811 738.3h13M1811 740.3h12M1811 742.3h11M1811 744.3h10M1811 746.3h11M1811 754.3h9M1811 756.3h11M1823 756.3h4M1828 756.3h6M1865 756.3h10M1876 756.3h10M1811 758.3h9M1811 760.3h15M1811 762.3h13M1811 764.3h9M1850 764.3h4M1811 766.3h11M1811 774.3h15M1811 776.3h8M1811 778.3h16M1811 780.3h13M1811 788.3h15M1834 788.3h11M1851 788.3h10M1862 788.3h4M1867 788.3h10M1811 790.3h13M1811 792.3h6M1811 800.3h9M1811 802.3h7M1811 804.3h14M1811 806.3h11M1827 806.3h6M1843 806.3h8M1865 806.3h4M1811 814.3h13M1811 816.3h8M1811 818.3h7M1811 820.3h6M1811 828.3h5M1811 830.3h8M1811 832.3h6M1811 834.3h12M1811 842.3h9M1811 844.3h12M1811 846.3h13M1811 848.3h8M1811 850.3h9M1811 852.3h5M1811 854.3h9M1811 856.3h9M1811 858.3h10M1811 860.3h7M1811 868.3h9M1811 870.3h10M1811 872.3h15M1811 874.3h12M1811 876.3h7M1811 878.3h12M1811 880.3h10M1811 882.3h5M1811 890.3h5M1811 898.3h5M1811 900.3h14M1811 902.3h8M1811 904.3h6M1811 912.3h12M1811 914.3h12M1811 916.3h9M1811 924.3h12M1811 926.3h12M1811 928.3h7M1811 930.3h12M1811 932.3h9M1811 934.3h8M1811 936.3h10M1852 936.3h3M1856 936.3h10M1811 938.3h14M1869 938.3h12M1811 946.3h7M1811 948.3h6M1811 950.3h7M1811 952.3h13M1811 954.3h18M1811 956.3h8M1820 956.3h9M1830 956.3h6M1837 956.3h3M1857 956.3h6M1811 958.3h6M1811 960.3h11M1811 962.3h4M1811 964.3h14M1811 966.3h8M1811 968.3h12M1811 970.3h13M1811 978.3h8M1811 980.3h7M1811 988.3h8M1811 990.3h8"/><path stroke="#67483c" d="M1820 118.3h4M1823 122.3h7M1820 124.3h10M1839 124.3h20M1860 124.3h18M1819 134.3h7M1821 136.3h7M1820 138.3h7M1817 140.3h7M1819 142.3h4M1824 144.3h7M1822 146.3h5M1824 148.3h4M1819 158.3h7M1821 160.3h7M1820 162.3h7M1817 164.3h7M1819 166.3h7M1823 168.3h7M1823 170.3h7M1825 172.3h7M1827 174.3h24M1820 188.3h11M1826 200.3h5M1822 204.3h7M1824 214.3h16M1825 216.3h13M1827 224.3h7M1821 230.3h10M1823 232.3h5M1822 236.3h19M1827 246.3h9M1823 248.3h11M1823 266.3h7M1826 272.3h7M1820 274.3h12M1824 286.3h24M1822 288.3h8M1823 294.3h21M1825 318.3h23M1818 338.3h6M1821 340.3h18M1826 356.3h3M1824 358.3h3M1820 360.3h14M1830 362.3h11M1821 372.3h5M1822 378.3h8M1823 388.3h11M1818 390.3h8M1824 392.3h20M1825 400.3h14M1822 404.3h5M1824 414.3h11M1824 416.3h20M1825 428.3h3M1823 432.3h10M1821 454.3h18M1825 464.3h3M1822 472.3h18M1821 490.3h6M1826 492.3h7M1825 502.3h21M1826 510.3h25M1824 532.3h24M1822 534.3h5M1816 536.3h8M1825 538.3h9M1825 552.3h7M1824 564.3h21M1819 570.3h9M1821 582.3h6M1819 584.3h6M1820 588.3h7M1822 596.3h9M1817 610.3h3M1822 612.3h13M1818 620.3h5M1824 622.3h4M1825 644.3h5M1822 656.3h13M1825 668.3h3M1819 670.3h6M1819 684.3h9M1819 696.3h6M1819 698.3h3M1820 710.3h15M1820 712.3h5M1821 716.3h10M1823 720.3h6M1822 722.3h21M1823 732.3h14M1825 738.3h21M1824 740.3h6M1823 742.3h9M1822 744.3h9M1823 746.3h4M1823 766.3h3M1827 774.3h9M1820 776.3h16M1828 778.3h9M1825 780.3h5M1826 804.3h22M1825 814.3h8M1821 842.3h15M1821 854.3h11M1821 856.3h5M1821 868.3h13M1822 870.3h19M1827 872.3h10M1824 874.3h14M1824 912.3h6M1824 914.3h8M1821 916.3h16M1821 932.3h9M1825 952.3h15M1830 954.3h12M1826 964.3h20M1820 978.3h15M1820 988.3h6M1820 990.3h14"/><path stroke="#6b5d3e" d="M1809 132.3h5M1809 156.3h5M1809 180.3h8M1809 194.3h7M1809 212.3h6M1809 244.3h4M1809 260.3h11M1821 260.3h4M1809 282.3h21M1809 314.3h19M1809 328.3h8M1809 348.3h9M1809 368.3h11M1821 368.3h6M1809 386.3h14M1824 386.3h4M1809 398.3h4M1809 412.3h12M1809 426.3h6M1809 438.3h9M1809 450.3h4M1809 462.3h10M1820 462.3h8M1809 480.3h14M1809 498.3h20M1809 508.3h8M1809 516.3h12M1822 516.3h7M1809 548.3h4M1809 560.3h8M1809 580.3h4M1814 580.3h8M1809 594.3h15M1809 608.3h7M1809 618.3h12M1822 618.3h5M1809 630.3h12M1822 630.3h4M1809 642.3h10M1809 652.3h4M1809 664.3h20M1809 680.3h8M1818 680.3h4M1809 692.3h12M1822 692.3h6M1809 704.3h4M1814 704.3h10M1809 730.3h9M1809 752.3h6M1816 752.3h7M1809 772.3h6M1816 772.3h11M1809 786.3h8M1809 798.3h6M1809 812.3h6M1809 826.3h22M1809 840.3h9M1819 840.3h6M1809 866.3h5M1809 888.3h4M1814 888.3h15M1809 896.3h12M1822 896.3h7M1809 910.3h14M1809 922.3h8M1818 922.3h7M1809 944.3h4M1814 944.3h14M1809 976.3h10M1809 986.3h7M1817 986.3h8"/><path stroke="#7f6b00" d="M1815 132.3h1M1809 152.3h1M1815 156.3h1M1809 176.3h1M1818 180.3h1M1809 190.3h1M1817 194.3h1M1809 208.3h1M1816 212.3h1M1809 240.3h1M1814 244.3h1M1809 256.3h1M1826 260.3h1M1809 278.3h1M1831 282.3h1M1809 310.3h1M1829 314.3h1M1809 324.3h1M1818 328.3h1M1809 344.3h1M1819 348.3h1M1809 364.3h1M1828 368.3h1M1809 382.3h1M1829 386.3h1M1809 394.3h1M1814 398.3h1M1809 408.3h1M1822 412.3h1M1809 422.3h1M1816 426.3h1M1809 434.3h1M1819 438.3h1M1809 446.3h1M1814 450.3h1M1809 458.3h1M1829 462.3h1M1809 476.3h1M1824 480.3h1M1809 494.3h1M1830 498.3h1M1809 504.3h1M1818 508.3h1M1809 512.3h1M1830 516.3h1M1809 544.3h1M1814 548.3h1M1809 556.3h1M1818 560.3h1M1809 576.3h1M1823 580.3h1M1809 590.3h1M1825 594.3h1M1809 604.3h1M1817 608.3h1M1809 614.3h1M1828 618.3h1M1809 626.3h1M1827 630.3h1M1809 638.3h1M1820 642.3h1M1809 648.3h1M1814 652.3h1M1809 658.3h1M1830 664.3h1M1809 676.3h1M1823 680.3h1M1809 688.3h1M1829 692.3h1M1809 700.3h1M1825 704.3h1M1809 726.3h1M1819 730.3h1M1809 748.3h1M1824 752.3h1M1809 768.3h1M1828 772.3h1M1809 782.3h1M1818 786.3h1M1809 794.3h1M1816 798.3h1M1809 808.3h1M1816 812.3h1M1809 822.3h1M1832 826.3h1M1809 836.3h1M1826 840.3h1M1809 862.3h1M1815 866.3h1M1809 884.3h1M1830 888.3h1M1809 892.3h1M1830 896.3h1M1809 906.3h1M1824 910.3h1M1809 918.3h1M1826 922.3h1M1809 940.3h1M1829 944.3h1M1809 972.3h1M1820 976.3h1M1809 982.3h1M1826 986.3h1"/><path stroke="#6a6a6a" d="M1811 134.3h6M1811 136.3h8M1811 138.3h7M1811 140.3h4M1811 142.3h6M1811 144.3h11M1811 146.3h9M1811 148.3h11M1811 150.3h13M1837 150.3h4M1811 158.3h6M1811 160.3h8M1811 162.3h7M1811 164.3h4M1811 166.3h6M1811 168.3h11M1811 170.3h11M1811 172.3h13M1811 174.3h15"/><path stroke="#5a6754" d="M1826 150.3h1M1828 150.3h3M1832 150.3h4M1842 150.3h1M1844 150.3h1M1846 150.3h1M1848 150.3h4M1816 182.3h3M1819 198.3h9M1824 202.3h12M1821 206.3h10M1823 218.3h4M1823 220.3h4M1828 222.3h7M1825 226.3h5M1823 228.3h5M1822 234.3h15M1836 238.3h4M1828 250.3h8M1824 252.3h19M1822 254.3h10M1820 264.3h16M1818 268.3h5M1823 270.3h4M1835 276.3h7M1822 284.3h19M1823 290.3h11M1827 292.3h8M1821 296.3h10M1825 298.3h5M1824 300.3h15M1821 302.3h11M1833 302.3h5M1821 304.3h8M1826 306.3h10M1821 308.3h15M1837 308.3h8M1821 316.3h9M1823 320.3h4M1820 322.3h9M1829 330.3h12M1836 332.3h8M1816 334.3h7M1823 336.3h8M1820 350.3h6M1827 350.3h3M1820 352.3h16M1824 354.3h17M1822 370.3h6M1829 374.3h3M1820 376.3h4M1823 380.3h8M1822 402.3h4M1820 406.3h11M1820 418.3h12M1832 420.3h7M1823 430.3h16M1820 440.3h6M1818 442.3h7M1827 444.3h6M1819 452.3h5M1823 456.3h9M1823 466.3h23M1820 468.3h5M1826 468.3h5M1818 470.3h6M1825 470.3h9M1830 474.3h3M1822 482.3h10M1830 484.3h3M1825 486.3h8M1822 488.3h4M1827 488.3h4M1820 500.3h6M1824 518.3h14M1819 524.3h5M1826 526.3h7M1834 526.3h5M1819 528.3h13M1827 530.3h8M1826 540.3h7M1821 542.3h16M1823 550.3h8M1818 554.3h8M1827 554.3h5M1820 562.3h5M1826 566.3h4M1831 566.3h8M1826 568.3h6M1821 572.3h12M1817 574.3h7M1821 586.3h10M1822 598.3h20M1820 600.3h10M1823 624.3h10M1819 632.3h8M1825 634.3h8M1824 636.3h11M1826 646.3h6M1822 654.3h10M1818 666.3h5M1824 666.3h8M1821 672.3h6M1823 674.3h19M1819 682.3h7M1825 686.3h6M1822 694.3h10M1824 706.3h12M1818 708.3h6M1820 714.3h6M1827 714.3h7M1816 718.3h7M1824 718.3h4M1850 724.3h4M1825 734.3h22M1821 754.3h10M1821 758.3h10M1827 760.3h9M1834 762.3h9M1825 790.3h4M1818 792.3h4M1823 792.3h7M1821 800.3h17M1819 802.3h9M1820 816.3h3M1819 818.3h9M1818 820.3h6M1817 828.3h8M1820 830.3h7M1828 832.3h7M1836 834.3h4M1824 844.3h8M1825 846.3h6M1820 848.3h11M1832 848.3h6M1821 850.3h14M1817 852.3h11M1822 858.3h9M1832 858.3h4M1819 860.3h4M1819 876.3h9M1824 878.3h7M1822 880.3h10M1817 882.3h6M1824 882.3h3M1817 890.3h3M1817 898.3h3M1826 900.3h8M1835 900.3h5M1820 902.3h14M1818 904.3h6M1824 924.3h11M1830 928.3h3M1824 930.3h5M1820 934.3h8M1819 946.3h7M1827 946.3h9M1818 948.3h6M1819 950.3h10M1818 958.3h10M1842 960.3h5M1816 962.3h8M1820 966.3h6M1824 968.3h5M1819 980.3h5"/><path stroke="#6d386b" d="M1841 150.3h1M1852 150.3h1"/><path stroke="#6c7b64" d="M1831 184.3h4M1853 184.3h11M1834 186.3h5M1862 186.3h12M1833 196.3h11M1845 196.3h8M1854 196.3h12M1867 196.3h8M1828 262.3h4M1836 520.3h9M1850 522.3h10M1861 522.3h4M1824 602.3h10M1835 602.3h8M1844 602.3h7M1852 602.3h7M1860 602.3h6M1824 736.3h4M1851 736.3h9M1861 736.3h7M1846 756.3h10M1857 756.3h7M1832 764.3h11M1844 764.3h5M1834 806.3h8M1852 806.3h12M1870 806.3h3M1847 926.3h4M1874 926.3h8M1830 936.3h9M1840 936.3h11M1826 938.3h8M1849 938.3h6M1856 938.3h12M1882 938.3h6M1833 970.3h3M1859 970.3h11"/><path stroke="#7b5748" d="M1865 184.3h3M1830 186.3h3M1875 186.3h11M1822 196.3h10M1823 342.3h10M1834 342.3h12M1847 342.3h9M1857 342.3h5M1863 342.3h5M1858 520.3h3M1862 520.3h11M1821 522.3h11M1833 522.3h4M1867 602.3h10M1835 756.3h10M1821 764.3h10M1855 764.3h7M1827 788.3h6M1846 788.3h4M1823 806.3h3M1824 926.3h10M1835 926.3h11M1852 926.3h11M1864 926.3h9M1822 936.3h7M1835 938.3h4M1840 938.3h8M1841 956.3h3M1845 956.3h11M1825 970.3h7M1837 970.3h11M1849 970.3h9M1871 970.3h7"/><path stroke="#aa3131" d="M1824 238.3h11M1827 276.3h7M1824 332.3h11M1820 374.3h8M1824 420.3h7M1824 474.3h5M1825 484.3h4M1818 530.3h8M1824 724.3h25M1825 762.3h8M1818 832.3h9M1824 834.3h11M1819 928.3h10M1823 960.3h18"/><path stroke="#567448" d="M1809 662.3h34"/></svg>
<div class="a" style="left:1903px;top:115px;width:1px;height:878px;background:#303030;"></div>
<div class="a" style="left:1903px;top:115px;width:17px;height:31px;background:#41778c;"></div>
<div class="a" style="left:1904px;top:123px;width:16px;height:2px;background:#9fd6e6;"></div>
<div class="a" style="left:1909px;top:122px;width:7px;height:6px;background:#8cc4d4;"></div>
<div class="a" style="left:1909px;top:134px;width:7px;height:6px;background:#8cc4d4;"></div>
<!-- status bar -->
<span class="t " style="left:74.00px;top:996px;font-size:15px;letter-spacing:-0.100px;color:#fff;">master*</span>
<span class="t " style="left:256.65px;top:996px;font-size:15px;letter-spacing:-0.244px;color:#fff;">Launchpad</span>
<span class="t " style="left:374.10px;top:996px;font-size:15px;letter-spacing:0.000px;color:#fff;">0</span>
<span class="t " style="left:410.20px;top:996px;font-size:15px;letter-spacing:0.000px;color:#fff;">0</span>
<span class="t " style="left:1188.45px;top:996px;font-size:15px;letter-spacing:-0.185px;color:#fff;">Ln 9, Col 8</span>
<span class="t " style="left:1278.05px;top:996px;font-size:15px;letter-spacing:-0.594px;color:#fff;">Spaces: 2</span>
<span class="t " style="left:1358.90px;top:996px;font-size:15px;letter-spacing:-0.550px;color:#fff;">UTF-8</span>
<span class="t " style="left:1418.55px;top:996px;font-size:15px;letter-spacing:-1.833px;color:#fff;">CRLF</span>
<span class="t " style="left:1499.00px;top:996px;font-size:15px;letter-spacing:-0.467px;color:#fff;">HTML</span>
<span class="t " style="left:1582.50px;top:996px;font-size:15px;letter-spacing:-0.305px;color:#fff;">Finish Setup</span>
<span class="t " style="left:1706.50px;top:996px;font-size:15px;letter-spacing:-0.200px;color:#fff;">Port : 5500</span>
<span class="t " style="left:1821.50px;top:996px;font-size:15px;letter-spacing:0.036px;color:#fff;">Prettier</span>
<svg style="left:0;top:994px" width="440" height="26" viewBox="0 994 440 26" fill="none" stroke="#fff" stroke-width="1.400" stroke-linejoin="round">
<path d="M13.700 1003.200l5.200 5.300-5.200 5.300M26.500 998.300l-5 5.100 5 5.100" stroke-width="1.500"/>
<circle cx="55.600" cy="998.800" r="2.300"/><circle cx="55.600" cy="1012.800" r="2.300"/><circle cx="65.300" cy="1001.800" r="2.300"/><path d="M55.600 1001.100v9.400M65.300 1004.100c0 3.500-9.700 2-9.700 6"/>
<circle cx="64.400" cy="1010.800" r="5" fill="#fff" stroke="none"/><path stroke="#000" stroke-width="1.200" d="M64.400 1007.600v6.400M61.600 1009.200l5.600 3.200M67.200 1009.200l-5.600 3.200"/>
<path d="M139.2 1011.4A6.6 6.6 0 0 1 143.2 999.4M146.8 1000.6A6.6 6.6 0 0 1 142.8 1012.6" stroke-width="1.500"/><path fill="#fff" stroke="none" d="M146.5 999.8L143.5 996.8L142.8 1001.9zM139.5 1012.2L142.5 1015.2L143.2 1010.1z"/>
<circle cx="177.200" cy="1000.200" r="2.100"/><circle cx="177.200" cy="1011.900" r="2.100"/><circle cx="187.400" cy="1005.300" r="2.100"/><path d="M177.200 1002.400v7.300M182.300 997.300v18.600M187.400 1007.500v1.400a3 3 0 0 1-3 3h-2.100"/>
<path d="M230.300 998.800c-4.600-.500-8.700 1.900-10.700 6.100l4.100 4.100c4.300-1.900 7-5.700 6.600-10.200zM220.300 1004l-3.300.5 2.200-3M225 1008.600l-.5 3.300 3-2.200" stroke-width="1.500"/><circle cx="225.300" cy="1003.900" r="1.400" stroke-width="1.200"/><path d="M219.600 1009l-2.800 2.900M221.700 1010.700l-1.800 1.900M218 1007.500l-1.600 1.700" stroke-width="1.300"/>
<g transform="rotate(-45 243.1 1005.3)" stroke-width="1.500"><path d="M241.1 1001.0A5.6 4.3 0 0 0 241.1 1009.5999999999999zM246.1 1001.0A5.6 4.3 0 0 1 246.1 1009.5999999999999zM246.1 1003.4h-2.600M246.1 1007.1999999999999h-2.600M235.5 1005.3h-4.200M251.7 1005.3h3.600"/></g>
<circle cx="359.400" cy="1005.900" r="7.600"/><path d="M356.300 1002.800l6.200 6.200M362.500 1002.800l-6.200 6.200"/>
<path d="M396.100 998.500l7.900 14.300h-15.800z"/><path d="M396.100 1003v4.800M396.100 1009.300v1.600" stroke-width="1.600"/>
</svg>
<svg style="left:1470px;top:994px" width="450" height="26" viewBox="1470 994 450 26" fill="none" stroke="#fff" stroke-width="1.400" stroke-linejoin="round">
<path d="M1478.600 998.400c-1.800 0-2.300.8-2.300 2.200v2.600c0 1.300-.6 2-1.700 2.300 1.100.3 1.700 1 1.700 2.300v2.600c0 1.400.5 2.200 2.300 2.200M1485.800 998.400c1.800 0 2.300.8 2.300 2.200v2.600c0 1.300.6 2 1.700 2.300-.8.200-1.300.6-1.500 1.300" stroke-width="1.300"/>
<circle cx="1486.900" cy="1012.400" r="3.900" fill="#fff" stroke="none"/><path stroke="#000" stroke-width="1.100" d="M1485.300 1010.800l3.200 3.200M1488.500 1010.800l-3.200 3.200"/>
<g stroke="none"><ellipse cx="1568.350" cy="1009.400" rx="10.400" ry="5.800" fill="#fff"/><rect x="1560.200" y="997.300" width="8.700" height="8" rx="3.300" fill="#fff"/><rect x="1568" y="997.300" width="8.800" height="8" rx="3.300" fill="#fff"/><rect x="1562.400" y="999.700" width="4.200" height="4" rx="1.600" fill="#000"/><rect x="1570.300" y="999.700" width="4.100" height="4" rx="1.600" fill="#000"/><path fill="#000" d="M1562 1006.200h12.600v3.400a2.800 2.800 0 0 1-2.800 2.800h-7a2.800 2.800 0 0 1-2.800-2.800z"/><rect x="1565" y="1007.300" width="1.800" height="3.500" fill="#fff"/><rect x="1570.200" y="1007.300" width="1.800" height="3.500" fill="#fff"/></g>
<circle cx="1692.800" cy="1006" r="8.300"/><path d="M1687 1011.900l11.600-11.800"/>
<path d="M1799.300 1006.300l3.800 4 8.800-9.600M1805.800 1008.600l1.700 1.700 9.600-10.200" stroke-width="1.500"/>
<path d="M1893.600 1012c1.500-1.100 2.200-2.600 2.200-4.800v-2a4.900 4.900 0 0 1 6-4.800M1905.400 1005v2.200c0 2.200.700 3.700 2.200 4.800M1893.600 1012.100h14M1898.700 1013.600a2 2 0 0 0 3.800 0" stroke-width="1.600"/>
<circle cx="1905" cy="1001" r="3.700" fill="#fff" stroke="none"/>
</svg>
<!-- annotations -->
<span class="t " style="left:1264.70px;top:559px;font-size:28.8px;letter-spacing:0.663px;color:#fff;">Code-Entwicklung</span>
<span class="t " style="left:1266.20px;top:598px;font-size:28.8px;letter-spacing:0.595px;color:#fff;">Ausschnitt -</span>
<span class="t " style="left:1265.20px;top:638px;font-size:28.8px;letter-spacing:0.703px;color:#fff;">obdachlosen-peer.de</span>
<div class="a" style="left:1506px;top:762px;width:265px;height:70px;background:#12d146;"></div>
<span class="t " style="left:1511.15px;top:778px;font-size:28.8px;letter-spacing:-0.095px;color:#f2fff4;">Live-Server</span>
<svg style="left:1600px;top:850px" width="100" height="112" viewBox="1600 850 100 112"><path fill="#1fcc4e" fill-rule="evenodd" d="M1638.300 856.500L1607.500 879.800L1640.400 924.400L1625.300 936.100L1689.800 956.700L1687.700 888L1671.300 900.400zM1636.300 870.900L1621.900 881.200L1654.100 925.800L1646.600 932.600L1679.100 942.700L1678.100 907.900L1669.900 913.400z"/></svg>
</body></html>
